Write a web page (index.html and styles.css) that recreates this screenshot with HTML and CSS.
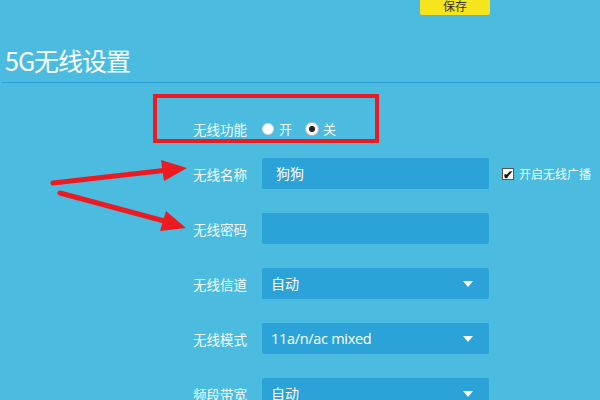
FILE: index.html
```html
<!DOCTYPE html>
<html lang="zh-CN">
<head>
    <meta charset="UTF-8">
    <meta name="viewport" content="width=device-width, initial-scale=1.0">
    <title>5G无线设置</title>
    <link rel="stylesheet" href="styles.css">
</head>
<body>
    <div class="topbar">
        <button class="save">保存</button>
    </div>

    <h1 class="title">5G无线设置</h1>

    <div class="form">
        <div class="row row-switch">
            <span class="label">无线功能</span>
            <div class="radios">
                <label class="radio"><span class="dot"></span>开</label>
                <label class="radio on"><span class="dot"></span>关</label>
            </div>
        </div>

        <div class="row">
            <span class="label">无线名称</span>
            <div class="input name">狗狗</div>
            <label class="check"><span class="box">&#10004;</span>开启无线广播</label>
        </div>

        <div class="row">
            <span class="label">无线密码</span>
            <div class="input"></div>
        </div>

        <div class="row">
            <span class="label">无线信道</span>
            <div class="input select">自动<span class="caret"></span></div>
        </div>

        <div class="row">
            <span class="label">无线模式</span>
            <div class="input select latin">11a/n/ac mixed<span class="caret"></span></div>
        </div>

        <div class="row">
            <span class="label">频段带宽</span>
            <div class="input select">自动<span class="caret"></span></div>
        </div>
    </div>

    <!-- red annotation marks drawn over the page -->
    <svg class="marks" width="600" height="400" viewBox="0 0 600 400">
        <rect x="155" y="96" width="222" height="45" fill="none" stroke="#ec1b22" stroke-width="4"/>
        <line x1="53" y1="183" x2="168" y2="170" stroke="#ec1b22" stroke-width="5" stroke-linecap="round"/>
        <polygon points="187,168 161,160 164,181" fill="#ec1b22"/>
        <line x1="60" y1="193" x2="168" y2="222" stroke="#ec1b22" stroke-width="5" stroke-linecap="round"/>
        <polygon points="186,228 166,211 160,231" fill="#ec1b22"/>
    </svg>
</body>
</html>
```

FILE: styles.css
```css
body {
    margin: 0;
    width: 600px;
    height: 400px;
    overflow: hidden;
    position: relative;
    background-color: #4bbbe0;
    color: #f4fbff;
    font-family: "Noto Sans CJK SC", "Noto Sans", sans-serif;
}
.topbar {
    display: flex;
    height: 15px;
}
.save {
    margin: -5px 0 0 420px;
    width: 70px;
    height: 20px;
    padding: 2px 0 0;
    border: none;
    border-radius: 2px;
    background-color: #f6e51e;
    color: #333;
    font-family: inherit;
    font-size: 12px;
    line-height: 18px;
}
.title {
    margin: 30px 0 0 2px;
    padding: 0 0 7px 3px;
    font-size: 25px;
    font-weight: normal;
    line-height: 30px;
    letter-spacing: -1px;
    color: #fff;
    border-bottom: 1px solid #2a9fd6;
}
.form {
    padding-top: 30px;
}
.row {
    display: grid;
    grid-template-columns: 247px 227px auto;
    column-gap: 15px;
    align-items: center;
    height: 31px;
    margin-bottom: 24px;
}
.row-switch {
    margin-bottom: 14px;
}
.label {
    text-align: right;
    font-size: 13.5px;
}
.radios {
    display: flex;
    gap: 14px;
    font-size: 13px;
}
.radio {
    display: flex;
    align-items: center;
    gap: 5px;
}
.dot {
    width: 12px;
    height: 12px;
    border-radius: 50%;
    background-color: #fff;
    box-sizing: border-box;
    border: 1px solid #ddd;
}
.radio.on .dot {
    border: 3px solid #fff;
    background-color: #222;
    box-shadow: 0 0 0 1px #bbb;
}
.input {
    position: relative;
    height: 31px;
    line-height: 31px;
    padding-left: 9px;
    border-radius: 2px;
    background-color: #2ba2d8;
    font-size: 14px;
    color: #fff;
}
.input.name {
    padding-left: 14px;
}
.latin {
    font-family: "Open Sans", "Noto Sans", sans-serif;
    font-size: 14.5px;
    letter-spacing: -0.3px;
}
.caret {
    position: absolute;
    right: 16px;
    top: 13px;
    border-left: 5px solid transparent;
    border-right: 5px solid transparent;
    border-top: 6px solid #fff;
}
.check {
    display: flex;
    align-items: center;
    gap: 5px;
    margin-left: -2px;
    font-size: 12px;
}
.box {
    width: 12px;
    height: 12px;
    box-sizing: border-box;
    border: 1px solid #555;
    background-color: #fff;
    color: #111;
    font-size: 12px;
    font-weight: bold;
    line-height: 10px;
    text-align: center;
}
.marks {
    position: absolute;
    left: 0;
    top: 0;
}
```
